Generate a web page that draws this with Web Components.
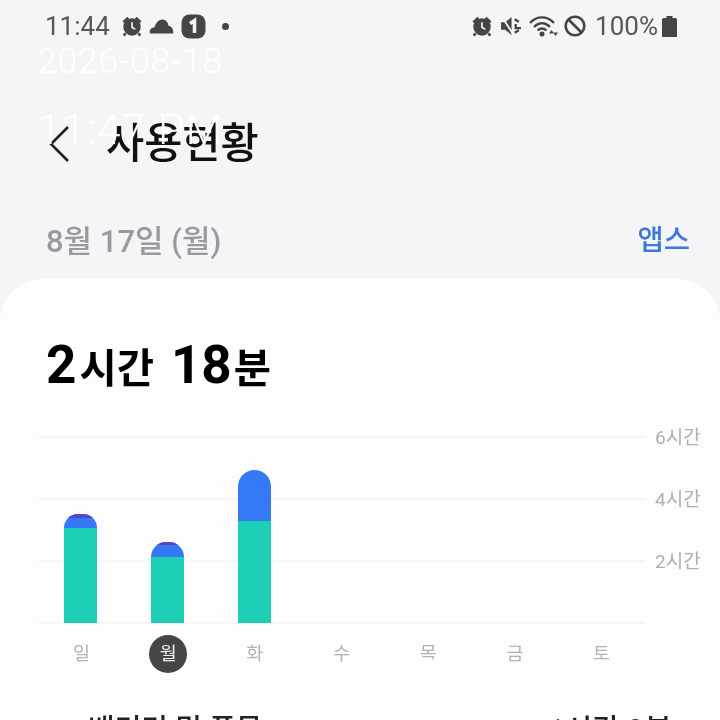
<!DOCTYPE html>
<html lang="ko"><head><meta charset="utf-8">
<style>html,body{margin:0;padding:0;background:#f5f5f8}body{width:720px;height:720px;overflow:hidden;position:relative;font-family:Roboto,"Noto Sans CJK KR",sans-serif}</style>
</head><body>
<usage-app></usage-app>
<script>
const F='Roboto,"Noto Sans CJK KR",sans-serif';
function el(name,css,html){customElements.define(name,class extends HTMLElement{constructor(){super();this.attachShadow({mode:'open'}).innerHTML='<style>'+css+'</style>'+html(this)}})}
const alarm=(w)=>`<svg width="${w}" height="${w}" viewBox="0 0 24 24" fill="#454545"><path d="M1.500 7 7 2 9 4 4 9zM22.500 7 17 2 15 4 20 9z"/><circle cx="12" cy="13" r="9.500"/><path d="M5 20 3 22.500M19 20l2 2.500" stroke="#454545" stroke-width="2.800"/><path d="M12 8v5.500l3.600 2" stroke="#e6e6e6" stroke-width="2" fill="none"/></svg>`;
el('status-bar',`:host{display:flex;align-items:center;height:52px;padding:0 43px 0 45px;box-sizing:border-box;color:#575757;font:400 26px ${F}}
.g{display:flex;align-items:center}.sp{flex:1}svg{display:block}
.t{width:76px}.dot{width:7px;height:7px;border-radius:50%;background:#454545;margin-left:16px}`,()=>`
<div class="g"><span class="t">11:44</span>${alarm(22)}
<svg style="margin-left:6px" width="25" height="16" viewBox="0 0 25 16" fill="#454545"><path d="M1 15.500c-1-3 .8-6 4.500-6.200C7 4.500 10 1.500 13.500 1.500c3.300 0 5.600 3 6 6.300 3 .2 5.200 3.400 4.800 7.700z"/></svg>
<svg style="margin-left:7px" width="25" height="25" viewBox="0 0 25 25"><rect x=".5" y=".5" width="24" height="24" rx="8" fill="#454545"/><path d="M9 9.500 13.500 6.500V19" stroke="#f2f2f2" stroke-width="3.600" fill="none"/></svg>
<span class="dot"></span></div><span class="sp"></span>
<div class="g">${alarm(22)}
<svg style="margin-left:7px" width="22" height="22" viewBox="0 0 21 21" fill="#454545"><path d="M1 7h4l6-5v17l-6-5H1z"/><path d="M2 2 13 19" stroke="#f5f5f8" stroke-width="1.800"/><path d="M14 4l4 2.500M14 17l4-2.500M15 8.500v4h5" stroke="#454545" stroke-width="2.200" fill="none"/></svg>
<svg style="margin-left:7px" width="29" height="24" viewBox="0 0 29 23" fill="none" stroke="#454545"><path d="M1 8.500C8 1 18 1 25 8.500" stroke-width="2.300"/><path d="M5 12.500c5-5 11-5 16 0" stroke-width="2.300"/><path d="M8.500 16c3-2.600 6-2.600 9 0" stroke-width="2.300"/><circle cx="13" cy="19.500" r="2.500" fill="#454545" stroke="none"/><path d="M20 19l2.500-3.500 2.500 3.500zM24 18l2.500 3.500 2.500-3.500z" fill="#454545" stroke="none"/></svg>
<svg style="margin-left:6px" width="22" height="22" viewBox="0 0 22 22" fill="none" stroke="#454545" stroke-width="2.600"><circle cx="11" cy="11" r="9.300"/><path d="M4.500 4.500 17.500 17.500"/></svg>
<span style="margin-left:9px">100%</span>
<svg style="margin-left:4px" width="15" height="21" viewBox="0 0 15 21" fill="#454545"><path d="M4.500 0h6v2h3q1.500 0 1.500 1.500V21H0V3.500Q0 2 1.500 2h3z"/></svg></div>`);
el('page-head',`:host{display:flex;align-items:center;height:70px;margin-top:57px;padding-left:49px}
svg{display:block}h1{margin:0 0 0 37px;font:500 41.500px/1 ${F};color:#111;letter-spacing:0}`,()=>`
<svg width="20" height="36" viewBox="0 0 20 36" fill="none" stroke="#222" stroke-width="2.600"><path d="M19 1 2 18l17 17"/></svg><h1><slot></slot></h1>`);
el('date-row',`:host{display:flex;align-items:center;justify-content:space-between;height:50px;margin-top:37px;padding:0 30px 0 46px}
.d{font:500 31px/1 ${F};color:#9a9a9e}.a{font:500 28.500px/1 ${F};color:#3f78d8}`,()=>`<span class="d">8월 17일 (월)</span><span class="a">앱스</span>`);
el('usage-total',`:host{display:flex;align-items:baseline;padding-left:46px;height:56px;color:#000;font:700 53px/56px ${F}}small{font:700 40.500px/56px ${F};margin:0 17px 0 3px}small:last-child{margin:0 0 0 2px}`,()=>`<span>2</span><small>시간</small><span>18</span><small>분</small>`);
el('bar-col',`:host{display:flex;flex-direction:column;justify-content:flex-end;width:33px;height:100%;margin-left:var(--m,0)}
.top{height:var(--top);background:#3478f6;border-radius:17px 17px 0 0;overflow:hidden;flex:none}.top i{display:block;height:var(--p,0);background:#5b45c4}
.teal{height:var(--teal);background:#1dcfb5;flex:none}`,()=>`<div class="top"><i></i></div><div class="teal"></div>`);
el('usage-chart',`:host{display:block;margin-top:43px}
.plot{display:grid;grid-template-columns:1fr;height:188px}
.lines,.bars{grid-row:1;grid-column:1}
.lines{display:flex;flex-direction:column;justify-content:space-between;padding-left:38px}
.ln{display:flex;align-items:center;height:2px;color:#b0b0b0;font:400 19px/1 ${F}}
.ln i{display:block;width:607px;height:2px;background:#f5f5f6;flex:none}
.ln span{margin-left:10px;white-space:nowrap}
.bars{display:flex;align-items:stretch;padding-left:64px;padding-bottom:1px}
.days{display:grid;grid-template-columns:repeat(7,33px);column-gap:53.700px;padding-left:65px;margin-top:11px;color:#b4b4b4;font:400 18.500px/38px ${F};text-align:center}
.days span{height:38px;display:flex;justify-content:center}
.on{color:#eee}
b{font-weight:400;display:block;width:38px;height:38px;flex:none;border-radius:50%}
.on b{background:#454545}`,()=>`
<div class="plot"><div class="lines">
<div class="ln"><i></i><span>6시간</span></div><div class="ln"><i></i><span>4시간</span></div><div class="ln"><i></i><span>2시간</span></div><div class="ln"><i></i></div></div>
<div class="bars">
<bar-col style="--top:14px;--teal:95px;--p:4px"></bar-col>
<bar-col style="--top:15px;--teal:66px;--p:3px;--m:54px"></bar-col>
<bar-col style="--top:51px;--teal:102px;--m:54px"></bar-col></div></div>
<div class="days"><span><b>일</b></span><span class="on"><b>월</b></span><span><b>화</b></span><span><b>수</b></span><span><b>목</b></span><span><b>금</b></span><span><b>토</b></span></div>`);
el('usage-card',`:host{display:block;background:#fdfdfd;border-radius:42px 42px 0 0;margin-top:13px;padding-top:58px;height:441px;box-sizing:border-box;overflow:hidden}
.row{display:flex;align-items:center;justify-content:space-between;margin-top:40px;padding:0 48px 0 46px;height:34px;color:#222;font:500 27px/34px ${F}}
.l{display:flex;align-items:center}.l i{width:18px;height:18px;border-radius:50%;background:#1dcfb5;margin-right:24px}.l{font-size:29px}.r{font-size:30px}`,()=>`
<usage-total></usage-total><usage-chart></usage-chart>
<div class="row"><span class="l"><i></i>배터리 및 품목</span><span class="r">1시간 9분</span></div>`);
el('photo-stamp',`:host{position:absolute;inset:0;pointer-events:none;display:block;color:#fff}
div{position:absolute;white-space:nowrap}
.a{left:37px;top:41px;font:300 35.500px/40px ${F};letter-spacing:.8px;opacity:.95}
.b{left:37px;top:106px;font:300 43px/46px ${F};letter-spacing:1px;opacity:.95}
.c{left:229px;top:648px;display:flex;align-items:center;opacity:.85;font:800 36px/36px Inter,${F}}
svg{display:block;margin-right:15px}`,()=>`
<div class="a">2026-08-18</div><div class="b">11:47 PM</div>
<div class="c"><svg width="30" height="30" viewBox="0 0 30 30" fill="#fff"><rect x="0" y="0" width="9" height="7"/><rect x="0" y="9" width="13" height="21"/><rect x="15" y="9" width="15" height="21"/></svg>Timespread</div>`);
el('usage-app',`:host{display:block;width:720px;height:720px}.blur{filter:blur(.7px);height:720px;overflow:hidden}`,()=>`
<div class="blur"><status-bar></status-bar><page-head>사용현황</page-head><date-row></date-row><usage-card></usage-card></div><photo-stamp></photo-stamp>`);
</script></body></html>
